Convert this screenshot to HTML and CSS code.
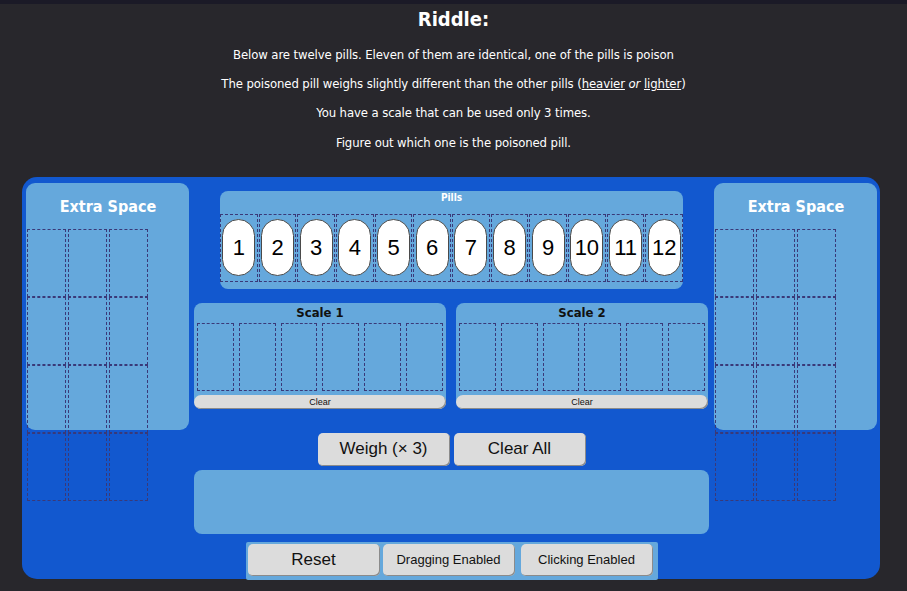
FILE: index.html
```
<!DOCTYPE html>
<html>
<head>
<meta charset="utf-8">
<link rel="stylesheet" href="styles.css">
</head>
<body>
<div class="topstrip"></div>
<header class="intro">
  <h1 class="title">Riddle:</h1>
  <p class="line">Below are twelve pills. Eleven of them are identical, one of the pills is poison</p>
  <p class="line">The poisoned pill weighs slightly different than the other pills (<u>heavier</u> <i>or</i> <u>lighter</u>)</p>
  <p class="line">You have a scale that can be used only 3 times.</p>
  <p class="line">Figure out which one is the poisoned pill.</p>
</header>
<main class="board">
  <section class="extra">
    <h2 class="extra-title">Extra Space</h2>
    <div class="extra-grid">
      <div class="cell"></div><div class="cell"></div><div class="cell"></div>
      <div class="cell"></div><div class="cell"></div><div class="cell"></div>
      <div class="cell"></div><div class="cell"></div><div class="cell"></div>
      <div class="cell"></div><div class="cell"></div><div class="cell"></div>
    </div>
  </section>
  <section class="center">
    <div class="pills">
      <div class="pills-label">Pills</div>
      <div class="pill-row">
        <div class="slot"><div class="pill">1</div></div>
        <div class="slot"><div class="pill">2</div></div>
        <div class="slot"><div class="pill">3</div></div>
        <div class="slot"><div class="pill">4</div></div>
        <div class="slot"><div class="pill">5</div></div>
        <div class="slot"><div class="pill">6</div></div>
        <div class="slot"><div class="pill">7</div></div>
        <div class="slot"><div class="pill">8</div></div>
        <div class="slot"><div class="pill">9</div></div>
        <div class="slot"><div class="pill">10</div></div>
        <div class="slot"><div class="pill">11</div></div>
        <div class="slot"><div class="pill">12</div></div>
      </div>
    </div>
    <div class="scales">
      <div class="scale">
        <div class="scale-title">Scale 1</div>
        <div class="scale-row">
          <div class="sslot"></div><div class="sslot"></div><div class="sslot"></div>
          <div class="sslot"></div><div class="sslot"></div><div class="sslot"></div>
        </div>
        <button class="clear">Clear</button>
      </div>
      <div class="scale">
        <div class="scale-title">Scale 2</div>
        <div class="scale-row">
          <div class="sslot"></div><div class="sslot"></div><div class="sslot"></div>
          <div class="sslot"></div><div class="sslot"></div><div class="sslot"></div>
        </div>
        <button class="clear">Clear</button>
      </div>
    </div>
    <div class="actions">
      <button class="btn">Weigh (× 3)</button>
      <button class="btn">Clear All</button>
    </div>
    <div class="result"></div>
    <div class="controls">
      <button class="btn">Reset</button>
      <button class="btn small">Dragging Enabled</button>
      <button class="btn small">Clicking Enabled</button>
    </div>
  </section>
  <section class="extra">
    <h2 class="extra-title">Extra Space</h2>
    <div class="extra-grid">
      <div class="cell"></div><div class="cell"></div><div class="cell"></div>
      <div class="cell"></div><div class="cell"></div><div class="cell"></div>
      <div class="cell"></div><div class="cell"></div><div class="cell"></div>
      <div class="cell"></div><div class="cell"></div><div class="cell"></div>
    </div>
  </section>
</main>
</body>
</html>
```
FILE: styles.css
```
* { box-sizing: border-box; }
html, body { margin: 0; padding: 0; }
body {
  background: #28272c;
  color: #fff;
  font-family: "DejaVu Sans Condensed", "DejaVu Sans", sans-serif;
  height: 591px;
  overflow: hidden;
}
.topstrip { height: 4px; background: #1b1a27; }
.intro { text-align: center; }
.title {
  margin: 3px 0 0;
  font-size: 20px;
  line-height: 24px;
  font-weight: bold;
}
.line {
  margin: 13px 0 0;
  font-size: 13px;
  line-height: 16.2px;
  letter-spacing: -0.1px;
}
.intro .line:first-of-type { margin-top: 16px; }
.line u { text-decoration: underline; }

.board {
  margin: 26px 0 0 22px;
  width: 858px;
  height: 402px;
  background: #1258cf;
  border-radius: 15px;
  padding: 6px 3px 0 4px;
  display: flex;
  gap: 5px;
  align-items: flex-start;
}
.extra {
  width: 163px;
  height: 247px;
  background: #65a8dc;
  border-radius: 9px;
  padding: 0 0 0 1px;
  flex: none;
}
.extra-title {
  margin: 0;
  padding-top: 14px;
  height: 46px;
  font-size: 16px;
  line-height: 20px;
  text-align: center;
  font-weight: bold;
  color: #fff;
}
.extra-grid {
  display: grid;
  grid-template-columns: repeat(3, 39px);
  grid-auto-rows: 68px;
  column-gap: 2px;
}
.cell { border: 1px dashed #3a3978; }

.center {
  width: 515px;
  flex: none;
  display: flex;
  flex-direction: column;
  align-items: center;
}
.pills {
  margin-top: 8px;
  width: 463px;
  height: 98px;
  background: #65a8dc;
  border-radius: 8px;
}
.pills-label {
  height: 23px;
  line-height: 14px;
  font-size: 10px;
  font-weight: bold;
  text-align: center;
  color: #fff;
}
.pill-row { display: flex; gap: 1px; }
.slot {
  flex: 1;
  height: 68px;
  border: 1px dashed #3a3978;
  display: flex;
  align-items: center;
  justify-content: center;
}
.pill {
  width: 33px;
  height: 57px;
  background: #fff;
  border: 1px solid #4a4a4a;
  border-radius: 17px;
  color: #000;
  font-family: "Liberation Sans", Arial, sans-serif;
  font-size: 22px;
  display: flex;
  align-items: center;
  justify-content: center;
}
.scales {
  margin-top: 14px;
  width: 515px;
  display: flex;
  justify-content: space-between;
}
.scale {
  width: 252px;
  height: 106px;
  background: #65a8dc;
  border-radius: 8px;
  display: flex;
  flex-direction: column;
}
.scale:last-child { margin-right: 1px; }
.scale-title {
  height: 20px;
  line-height: 20px;
  font-size: 13px;
  font-weight: bold;
  color: #111;
  text-align: center;
}
.scale-row {
  display: flex;
  gap: 5px;
  padding: 0 3px;
  height: 68px;
  margin-bottom: 4px;
}
.sslot { flex: 1; border: 1px dashed #3a3978; }
.clear {
  height: 14px;
  width: 100%;
  margin: 0;
  padding: 0;
  border: none;
  border-radius: 7px;
  background: #dcdcdc;
  box-shadow: inset -1px -1px 0 #8b8b8b;
  font-family: "Liberation Sans", Arial, sans-serif;
  font-size: 9px;
  line-height: 14px;
  color: #111;
}
.actions {
  margin-top: 24px;
  display: flex;
  gap: 4px;
}
.btn {
  width: 132px;
  height: 33px;
  margin: 0;
  padding: 0;
  border: none;
  border-radius: 5px;
  background: #dcdcdc;
  box-shadow: inset -1px -1px 0 #8b8b8b;
  font-family: "Liberation Sans", Arial, sans-serif;
  font-size: 17px;
  color: #111;
}
.btn.small { font-size: 13px; }
.result {
  margin-top: 4px;
  width: 515px;
  height: 64px;
  background: #65a8dc;
  border-radius: 8px;
}
.controls {
  margin-top: 8px;
  width: 412px;
  height: 38px;
  background: #65a8dc;
  border-radius: 2px;
  padding: 2px;
  display: flex;
  gap: 3px;
}
.controls .btn { height: 32px; width: 132px; }
.controls .btn:last-child { margin-left: 3px; }
```
